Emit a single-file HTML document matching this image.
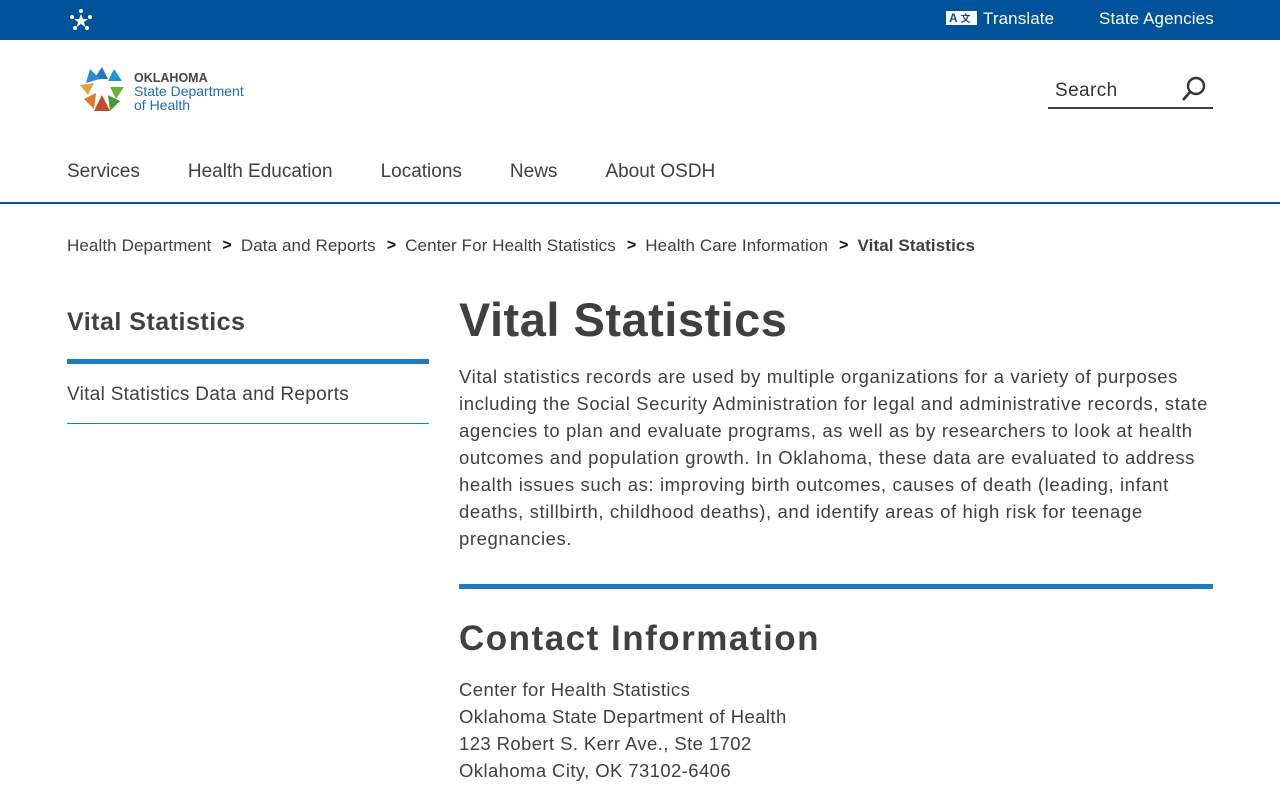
<!DOCTYPE html>
<html><head><meta charset="utf-8"><style>
*{margin:0;padding:0;box-sizing:border-box}
body{width:1280px;height:800px;overflow:hidden;background:#fff;font-family:"Liberation Sans",sans-serif;color:#404040}
.top{height:40px;background:#00529b;color:#fff;position:relative}
.top .t{position:absolute;top:9px;font-size:17px;letter-spacing:0.1px}
.hdr{height:164px;position:relative;border-bottom:2px solid #00529b}
.nav{position:absolute;top:121px;left:67px;font-size:19px;display:flex;gap:48px;color:#404040}
.search{position:absolute;left:1048px;top:35px;width:165px;height:34px;border-bottom:2px solid #404040;font-size:19px;padding:5px 0 0 7px;color:#333;letter-spacing:0.4px}
.bc{position:absolute;top:236px;left:67px;font-size:17px;display:flex;align-items:center;color:#404040;letter-spacing:0.1px}
.bc .ch{margin:0 9px 0 11px;font-weight:bold;font-size:16px;color:#111}
.side{position:absolute;left:67px;top:308px;width:362px}
.side h2{font-size:25px;font-weight:bold;height:56px;border-bottom:5px solid #1f7abf;letter-spacing:0.5px}
.side a{display:block;font-size:19px;padding:20px 0 17px;border-bottom:1px solid #1f7abf;letter-spacing:0.3px}
.main{position:absolute;left:459px;top:294px;width:754px}
.main h1{font-size:47px;font-weight:bold;line-height:52px;letter-spacing:0.5px}
.main p{font-size:18.5px;line-height:27px;letter-spacing:0.6px}
.main hr{border:0;border-top:5px solid #1f7abf;margin-top:32px}
.main h2{font-size:35px;font-weight:bold;margin-top:30px;letter-spacing:1.5px}
.addr{font-size:18.5px;line-height:27px;margin-top:17px;letter-spacing:0.4px}
</style></head><body>
<div class="top">
<svg style="position:absolute;left:70px;top:9px" width="22" height="22" viewBox="0 0 22 22"><g fill="#fff"><polygon points="11,5 13,10 18,10 14,13 15.5,18 11,15 6.5,18 8,13 4,10 9,10"/><circle cx="11" cy="2" r="2"/><circle cx="20" cy="8" r="2"/><circle cx="2" cy="8" r="2"/><circle cx="5" cy="19" r="2"/><circle cx="17" cy="19" r="2"/></g></svg>
<div style="position:absolute;left:946px;top:11px;width:31px;height:14px;background:#fff;color:#00529b;font-size:12px;font-weight:bold;line-height:14px;padding-left:3px">A <span style="font-family:'Noto Sans CJK SC';font-size:10px">文</span></div>
<div class="t" style="left:983px">Translate</div>
<div class="t" style="left:1099px">State Agencies</div>
</div>
<div class="hdr">
<svg style="position:absolute;left:78px;top:25px" width="48" height="48" viewBox="0 0 48 48">
<polygon points="24,2 30,14 16,14" fill="#1f7abf"/><polygon points="12,4 22,14 8,18" fill="#2a8fd0"/><polygon points="36,4 44,16 30,16" fill="#1a9bd6"/>
<polygon points="2,20 16,18 10,30" fill="#e8a23a"/><polygon points="46,22 38,34 32,22" fill="#6aae3f"/>
<polygon points="6,34 18,28 16,44" fill="#e07a24"/><polygon points="42,36 30,30 32,46" fill="#4a9a3a"/><polygon points="24,30 32,46 16,46" fill="#c8492a"/></svg>
<div style="position:absolute;left:134px;top:32px;font-size:12.5px;line-height:13px;font-weight:bold;color:#444">OKLAHOMA<br><span style="color:#1f6cb5;font-weight:normal;font-size:14px">State Department<br>of Health</span></div>
<div class="search">Search
<svg style="position:absolute;right:6px;top:1px" width="26" height="26" viewBox="0 0 26 26"><circle cx="15" cy="10" r="8" fill="none" stroke="#333" stroke-width="2.4"/><line x1="9" y1="16" x2="2" y2="24" stroke="#333" stroke-width="2.6"/></svg></div>
<div class="nav"><span>Services</span><span>Health Education</span><span>Locations</span><span>News</span><span>About OSDH</span></div>
</div>
<div class="bc"><span>Health Department</span><span class="ch">&gt;</span><span>Data and Reports</span><span class="ch">&gt;</span><span>Center For Health Statistics</span><span class="ch">&gt;</span><span>Health Care Information</span><span class="ch">&gt;</span><b>Vital Statistics</b></div>
<div class="side"><h2>Vital Statistics</h2><a>Vital Statistics Data and Reports</a></div>
<div class="main">
<h1>Vital Statistics</h1>
<p style="margin-top:17px">Vital statistics records are used by multiple organizations for a variety of purposes including the Social Security Administration for legal and administrative records, state agencies to plan and evaluate programs, as well as by researchers to look at health outcomes and population growth. In Oklahoma, these data are evaluated to address health issues such as: improving birth outcomes, causes of death (leading, infant deaths, stillbirth, childhood deaths), and identify areas of high risk for teenage pregnancies.</p>
<hr>
<h2>Contact Information</h2>
<div class="addr">Center for Health Statistics<br>Oklahoma State Department of Health<br>123 Robert S. Kerr Ave., Ste 1702<br>Oklahoma City, OK 73102-6406</div>
</div>
</body></html>
